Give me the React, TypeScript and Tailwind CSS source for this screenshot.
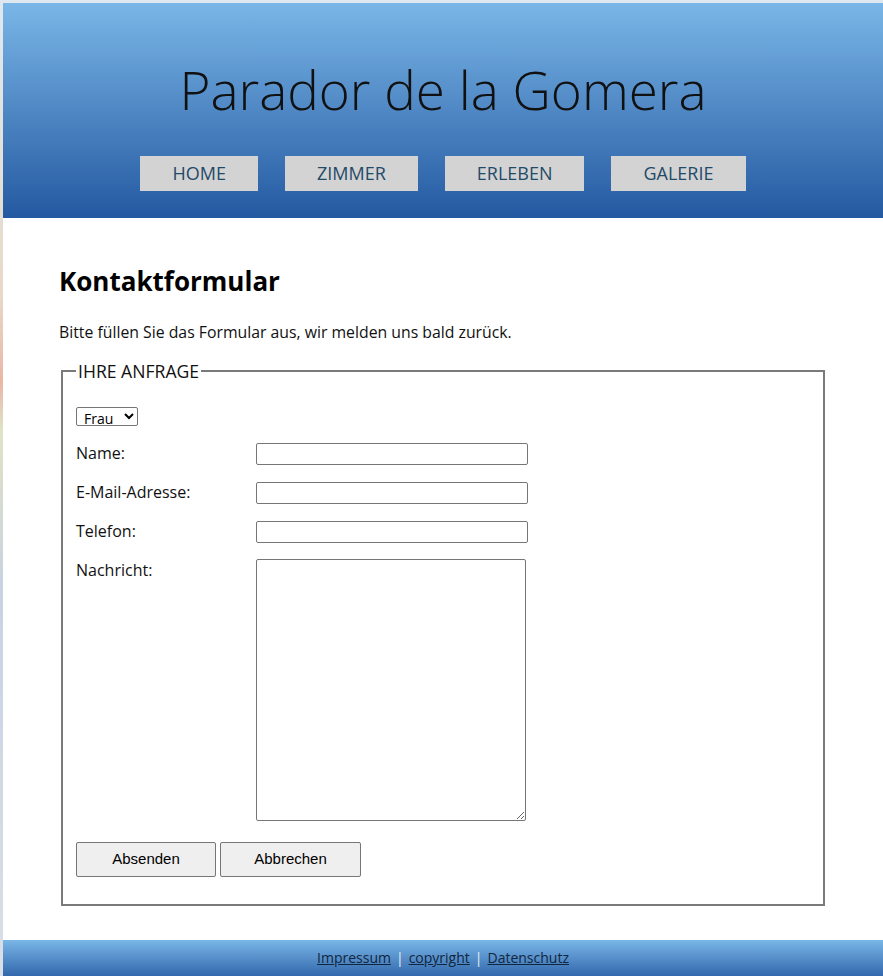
import React from "react";

export default function App() {
  const navItems = ["HOME", "ZIMMER", "ERLEBEN", "GALERIE"];
  return (
    <div
      className="min-h-screen w-full overflow-hidden pl-[3px] pt-[3px] bg-[linear-gradient(to_bottom,#dfe8f0_0%,#e8d9c8_30%,#e9b7a4_39%,#dfe4c6_44%,#d8dccf_50%,#c8d3e2_60%,#d9dfe6_100%)]"
      style={{ fontFamily: '"Open Sans", "Liberation Sans", sans-serif' }}
    >
      <div className="w-[880px] bg-white">
        <header className="h-[215px] bg-[linear-gradient(to_bottom,#7ab6e7,#2459a1)] pt-[51px]">
          <h1 className="text-center text-[53px] font-light leading-[72px] text-[#111]">
            Parador de la Gomera
          </h1>
          <nav className="mt-[30px] flex justify-center gap-[27px]">
            {navItems.map((n) => (
              <a
                key={n}
                className="flex h-[35px] items-center bg-[#d3d3d3] px-[32px] text-[18px] text-[#1f4a68]"
              >
                {n}
              </a>
            ))}
          </nav>
        </header>

        <main className="px-[56px] pt-[46px] pb-[34px]">
          <h2 className="text-[26px] font-bold leading-[35px] text-black">Kontaktformular</h2>
          <p className="mt-[22px] text-[15.8px] leading-[22px] text-[#111]">
            Bitte füllen Sie das Formular aus, wir melden uns bald zurück.
          </p>
          <fieldset className="mx-[2px] mt-[16px] border-2 border-[#7a7a7a] px-[13px] pb-[27px]">
            <legend className="px-[2px] text-[17.6px] leading-[24px] text-[#111]">IHRE ANFRAGE</legend>
            <div className="pt-[24px]">
              <select
                className="block h-[19px] w-[62px] rounded-[2px] border border-[#767676] bg-white py-0 pl-[3px] text-[14px] leading-[17px] text-black"
                style={{ fontFamily: '"Open Sans", "Liberation Sans", Arial, sans-serif' }}
                defaultValue="Frau"
              >
                <option>Frau</option>
                <option>Herr</option>
              </select>
              <div className="mt-[17px] flex flex-col gap-[17px]">
                {["Name:", "E-Mail-Adresse:", "Telefon:"].map((l) => (
                  <div key={l} className="flex items-start">
                    <label className="w-[180px] text-[16px] leading-[20px] text-[#111]">{l}</label>
                    <input
                      type="text"
                      className="h-[22px] w-[272px] rounded-[2px] border border-[#767676] bg-white"
                    />
                  </div>
                ))}
              </div>
              <div className="mt-[16px] flex items-start">
                <label className="w-[180px] text-[16px] leading-[22px] text-[#111]">Nachricht:</label>
                <textarea className="h-[262px] w-[270px] rounded-[2px] border border-[#767676] bg-white" />
              </div>
              <div
                className="mt-[21px] flex gap-[4px]"
                style={{ fontFamily: '"Liberation Sans", Arial, sans-serif' }}
              >
                <button className="h-[35px] w-[140px] rounded-[2px] border border-[#767676] bg-[#efefef] text-[15px] text-black">
                  Absenden
                </button>
                <button className="h-[35px] w-[141px] rounded-[2px] border border-[#767676] bg-[#efefef] text-[15px] text-black">
                  Abbrechen
                </button>
              </div>
            </div>
          </fieldset>
        </main>

        <footer className="flex h-[40px] items-start justify-center bg-[linear-gradient(to_bottom,#7ab6e7,#2a5fa6)] pt-[7px] text-[14px] leading-[22px]">
          <a className="text-[#10263f] underline">Impressum</a>
          <span className="mx-[5px] text-[#e8eef5]">|</span>
          <a className="text-[#10263f] underline">copyright</a>
          <span className="mx-[5px] text-[#e8eef5]">|</span>
          <a className="text-[#10263f] underline">Datenschutz</a>
        </footer>
      </div>
    </div>
  );
}
